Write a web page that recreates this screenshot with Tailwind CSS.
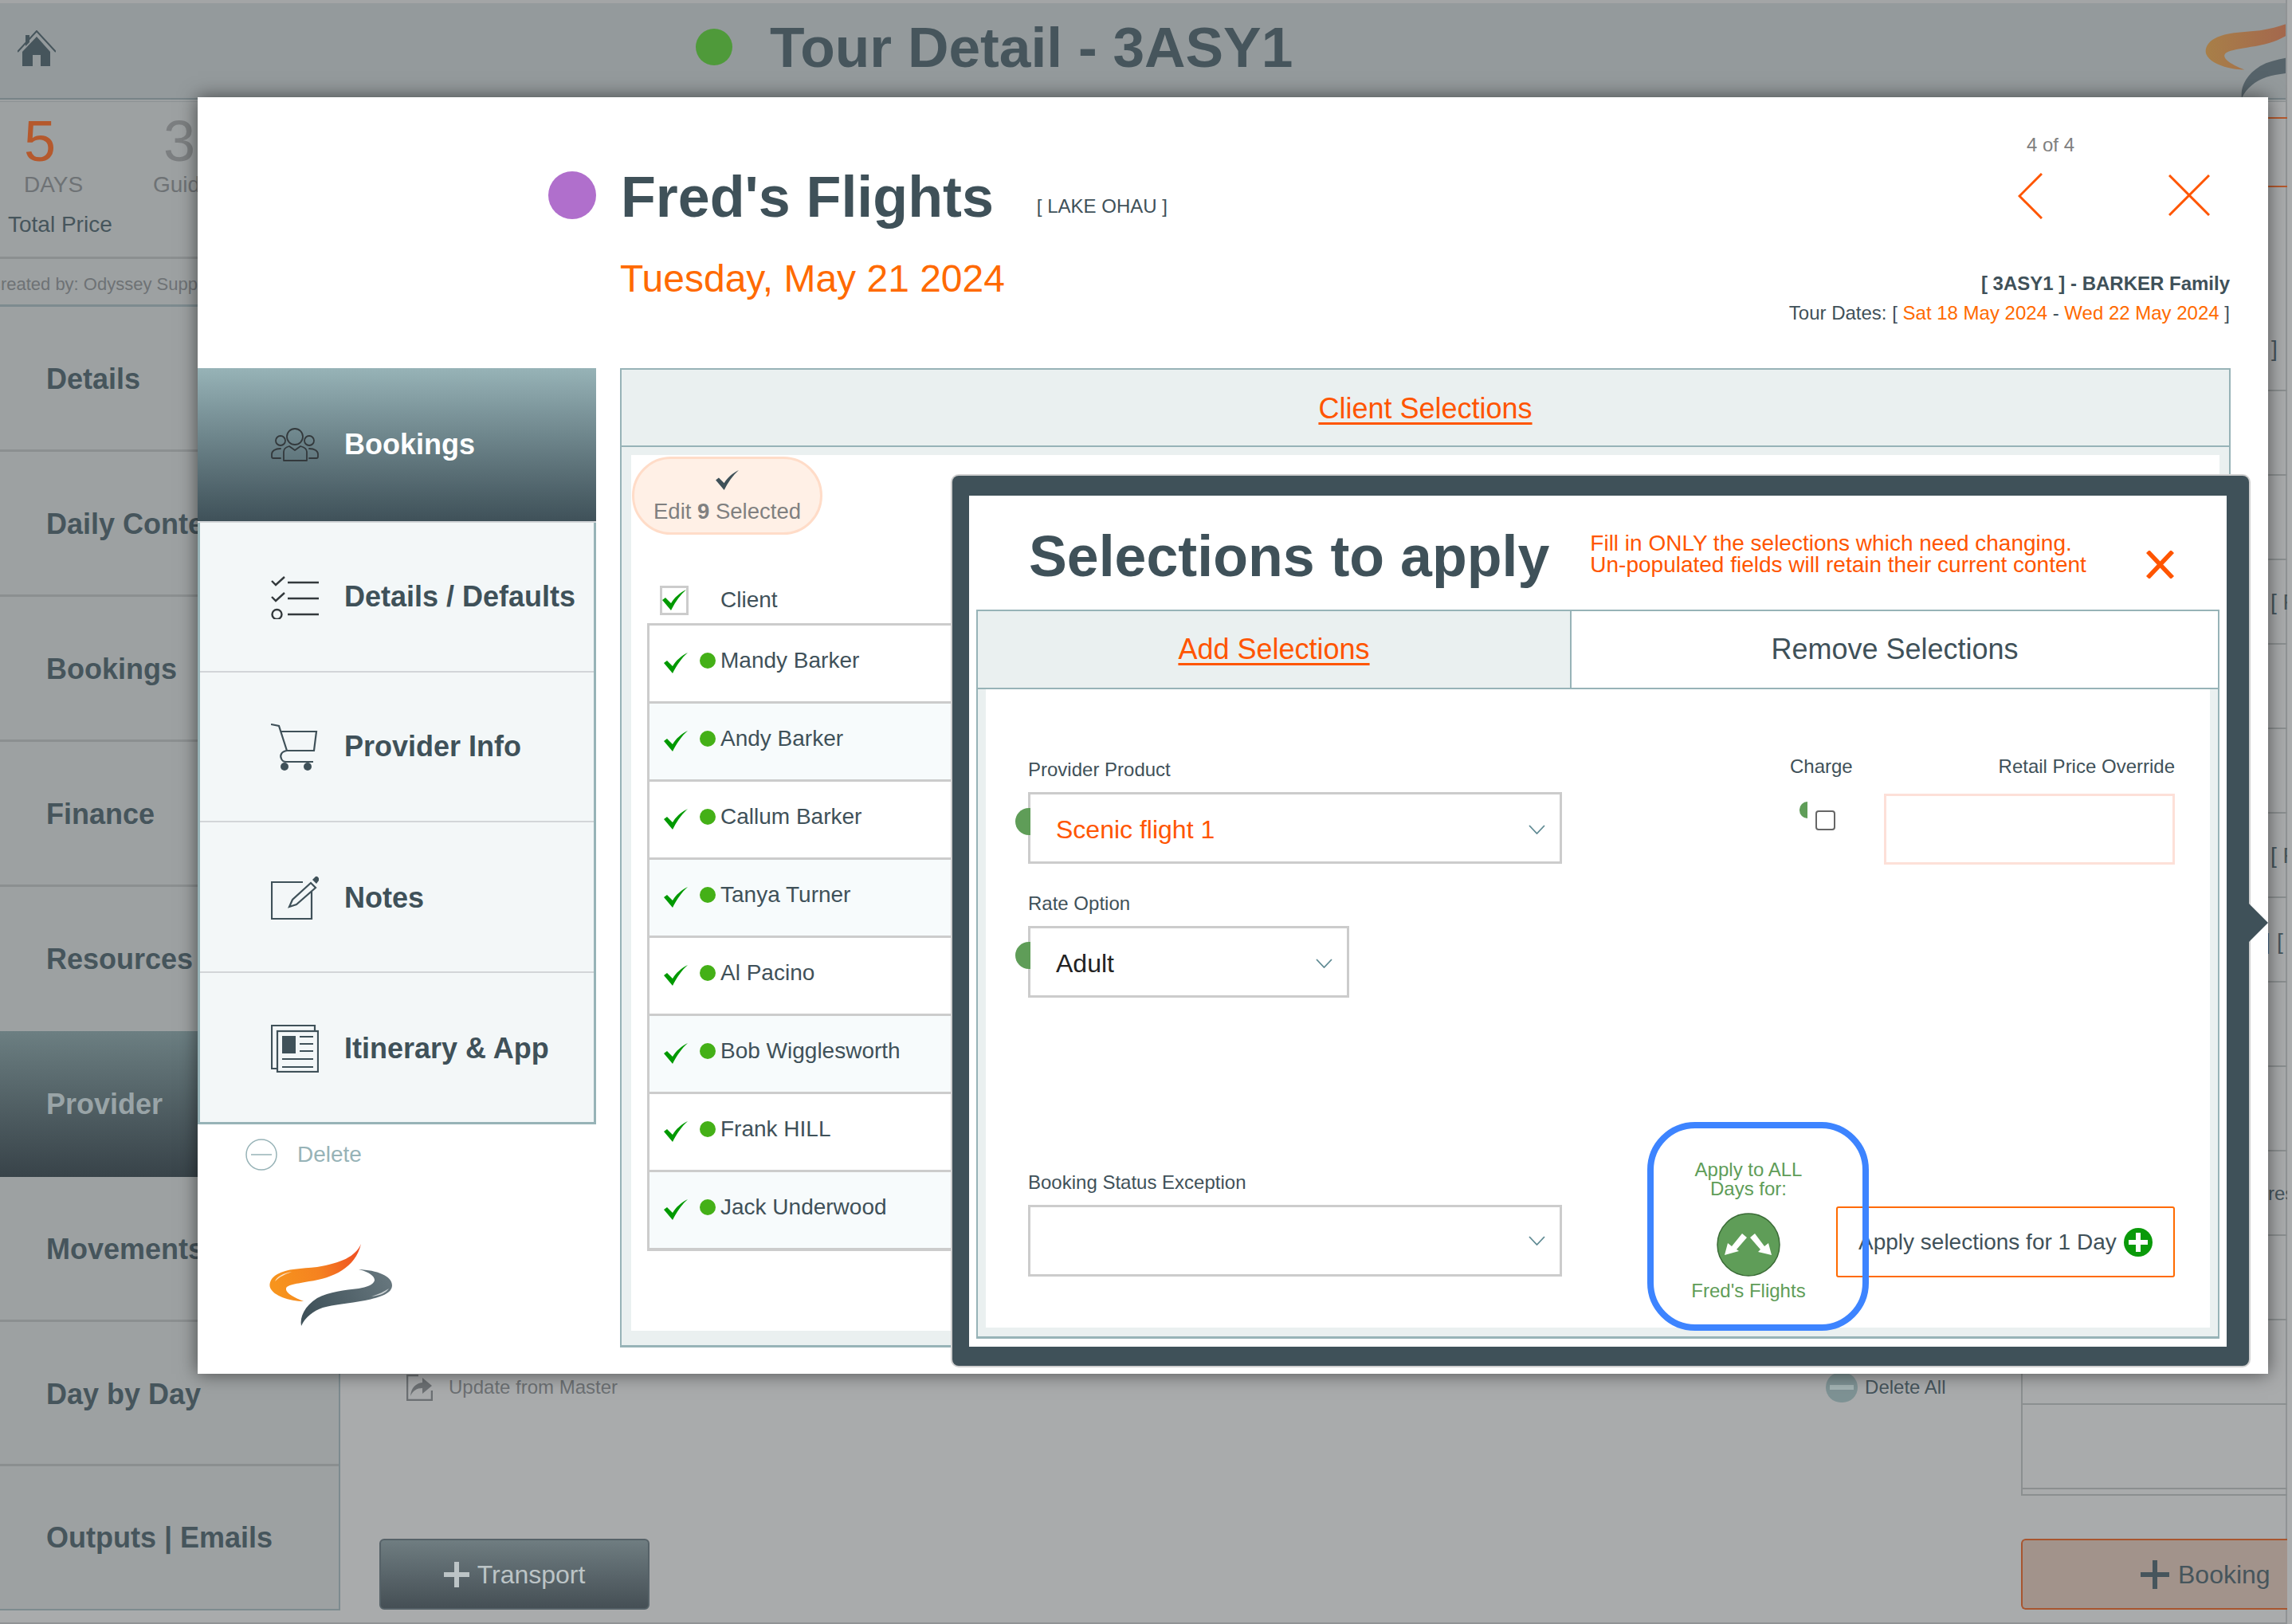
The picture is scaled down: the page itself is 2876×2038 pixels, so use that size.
<!doctype html>
<html>
<head>
<meta charset="utf-8">
<script src="https://cdn.jsdelivr.net/npm/@tailwindcss/browser@4"></script>
<title>Tour Detail</title>
</head>
<body class="font-['Liberation_Sans',Arial,sans-serif]">
<svg class="absolute w-0 h-0">
  <defs>
    <linearGradient id="o" x1="0" x2="1" y1="0.4" y2="0.2"><stop offset="0" stop-color="#f7941d"/><stop offset="0.5" stop-color="#f58220"/><stop offset="1" stop-color="#ef4e23"/></linearGradient>
    <linearGradient id="d" x1="0" x2="1" y1="0.6" y2="0.3"><stop offset="0" stop-color="#3f5159"/><stop offset="1" stop-color="#66767d"/></linearGradient>
    <linearGradient id="o2" x1="0" x2="1"><stop offset="0" stop-color="#a87f48"/><stop offset="1" stop-color="#a2604f"/></linearGradient>
  </defs>
</svg>
<div class="relative w-[2876px] h-[2038px] overflow-hidden flex bg-[#a9abac] text-[#46555c]">
  <!-- page behind the dialog -->
  <div class="w-[2870px] h-full flex flex-col border-r-2 border-[#909395]">
    <header class="relative h-[123px] shrink-0 border-t-[4px] border-[#a3a5a6] bg-[#949a9c] flex items-center pb-[9px] overflow-hidden">
      <svg class="ml-[22px] mt-[4px] w-[48px] h-[46px]" viewBox="0 0 48 46"><path d="M0 27L24 1L48 27" fill="none" stroke="#46555c" stroke-width="2"/><path fill="#46555c" d="M10 6h5v9l-5 5zM6 27L24 8L41 27V45H29V31H19V45H6z"/></svg>
      <div class="ml-[803px] w-[46px] h-[46px] rounded-full bg-[#4f9a3a]"></div>
      <div class="ml-[47px] text-[71.3px] font-bold leading-[72px] text-[#46555c]">Tour Detail - 3ASY1</div>
      <svg class="absolute left-[2767px] top-[1px] w-[178px] h-[118px]" viewBox="0 0 155 103"><path fill="url(#o2)" d="M115 0C108 16 90 24 60 29C40 31 22 31 10 38C2 42-1 50 1 55C5 65 25 72 43 72C33 68 20 62 21 56C22 51 35 50 50 47C80 43 108 30 115 0Z"/><path fill="#56636a" d="M112 32C135 33 154 40 154 52C154 62 140 67 120 71C100 75 80 76 67 80C55 84 45 92 40 103C38 92 44 78 60 68C75 60 95 58 112 56C122 54 130 52 132 46C133 40 122 34 112 32Z"/></svg>
    </header>
    <div class="h-[5px] shrink-0 border-t-2 border-b border-t-[#788488] border-b-[#8d9294] bg-[#9da1a2]"></div>
    <div class="flex flex-1 min-h-0 items-start border-b-2 border-[#909395] h-[1903px]">
      <!-- sidebar -->
      <aside class="w-[427px] shrink-0 h-[1893px] bg-[#9da1a2] border-r-2 border-b-2 border-[#7d8b8f] flex flex-col">
        <div class="h-[197px] shrink-0 border-b-[3px] border-[#8b8f90] pl-[10px]">
          <div class="flex pt-[13px]">
            <div class="w-[172px] pl-[20px]">
              <div class="text-[72px] leading-[72px] text-[#b5592d]">5</div>
              <div class="mt-[4px] text-[28px] leading-[30px] text-[#6e7275]">DAYS</div>
            </div>
            <div class="w-[100px] pl-[10px]">
              <div class="pl-[13px] text-[72px] leading-[72px] text-[#7c7f81]">3</div>
              <div class="mt-[4px] text-[28px] leading-[30px] text-[#6e7275]">Guides</div>
            </div>
          </div>
          <div class="mt-[20px] text-[28px] leading-[30px] text-[#46555c]">Total Price</div>
        </div>
        <div class="h-[60px] shrink-0 border-b-[3px] border-[#7d8b8f] -ml-[15px] pt-[18px] text-[22px] leading-[28px] text-[#6e7275] whitespace-nowrap">Created by: Odyssey Support</div>
        <div class="h-[182px] shrink-0 border-b-[3px] border-[#8b8f90] flex items-center pl-[58px] pt-[3px] text-[36px] font-bold">Details</div>
        <div class="h-[182px] shrink-0 border-b-[3px] border-[#8b8f90] flex items-center pl-[58px] pt-[3px] text-[36px] font-bold">Daily Content</div>
        <div class="h-[182px] shrink-0 border-b-[3px] border-[#8b8f90] flex items-center pl-[58px] pt-[3px] text-[36px] font-bold">Bookings</div>
        <div class="h-[182px] shrink-0 border-b-[3px] border-[#8b8f90] flex items-center pl-[58px] pt-[3px] text-[36px] font-bold">Finance</div>
        <div class="h-[181px] shrink-0 flex items-center pl-[58px] text-[36px] font-bold">Resources</div>
        <div class="h-[183px] shrink-0 bg-gradient-to-b from-[#6c7f82] to-[#384349] flex items-center pl-[58px] text-[36px] font-bold text-[#99a4a7]">Provider</div>
        <div class="h-[182px] shrink-0 border-b-[3px] border-[#8b8f90] flex items-center pl-[58px] pt-[3px] text-[36px] font-bold">Movements</div>
        <div class="h-[181px] shrink-0 border-b-[3px] border-[#8b8f90] flex items-center pl-[58px] pt-[3px] text-[36px] font-bold">Day by Day</div>
        <div class="h-[180px] shrink-0 flex items-center pl-[58px] text-[36px] font-bold">Outputs | Emails</div>
      </aside>
      <!-- main -->
      <main class="w-[2109px] shrink-0 pt-[1596px] flex flex-col">
        <div class="flex items-center h-[34px] pl-[83px] text-[24px]">
          <svg class="w-[33px] h-[33px]" viewBox="0 0 33 33"><path d="M15 1H1V32H32V20" fill="none" stroke="#6c7073" stroke-width="2.5"/><path fill="#6c7073" d="M5 27C6 16 12 11 20 10V4L32 14L20 24V17C13 17 8 20 5 27Z"/></svg>
          <span class="ml-[20px] text-[#6c7073]">Update from Master</span>
          <span class="ml-[1516px] w-[40px] h-[38px] rounded-full bg-[#7e9294] flex items-center justify-center"><span class="w-[30px] h-[6px] bg-[#a3b3b3]"></span></span>
          <span class="ml-[9px] text-[#46555c]">Delete All</span>
        </div>
        <div class="mt-[173px] ml-[49px] w-[339px] h-[89px] rounded-[6px] bg-gradient-to-b from-[#6f7d81] to-[#454f55] border-2 border-[#566268] flex items-center justify-center text-[32px] text-[#bcc4c6]">
          <svg class="w-[32px] h-[32px] mr-[10px]" viewBox="0 0 32 32"><path d="M13 0h6v13h13v6H19v13h-6V19H0v-6h13z" fill="#bcc4c6"/></svg>Transport
        </div>
      </main>
      <!-- right column -->
      <section class="w-[334px] shrink-0 flex flex-col">
        <div class="h-[257px] shrink-0 border-l-0 pt-[19px]">
          <div class="h-[88px] border-y-2 border-[#b5592d]"></div>
        </div>
        <div class="border-l-2 border-[#8b8f90] text-[28px] leading-[34px] text-[#46555c] whitespace-nowrap">
          <div class="h-[106px] overflow-hidden border-b-2 border-[#8b8f90] pl-[284px] pt-[36px]">R ]</div>
          <div class="h-[106px] border-b-2 border-[#8b8f90]"></div>
          <div class="h-[106px] border-b-2 border-[#8b8f90]"></div>
          <div class="h-[106px] overflow-hidden border-b-2 border-[#8b8f90] pl-[311px] pt-[36px]">[ F</div>
          <div class="h-[106px] border-b-2 border-[#8b8f90]"></div>
          <div class="h-[106px] border-b-2 border-[#8b8f90]"></div>
          <div class="h-[106px] overflow-hidden border-b-2 border-[#8b8f90] pl-[311px] pt-[36px]">[ F</div>
          <div class="h-[106px] overflow-hidden border-b-2 border-[#8b8f90] pl-[304px] pt-[38px]">| [</div>
          <div class="h-[106px] border-b-2 border-[#8b8f90]"></div>
          <div class="h-[106px] border-b-2 border-[#8b8f90]"></div>
          <div class="h-[106px] overflow-hidden border-b-2 border-[#8b8f90] pl-[308px] pt-[36px] text-[24px]">res</div>
          <div class="h-[106px] border-b-2 border-[#8b8f90]"></div>
          <div class="h-[106px] border-b-2 border-[#8b8f90]"></div>
          <div class="h-[106px] border-b-2 border-[#8b8f90]"></div>
          <div class="h-[8px] border-b-2 border-[#8b8f90]"></div>
        </div>
        <div class="mt-[54px] h-[89px] border-2 border-r-0 border-[#a8552f] rounded-l-[6px] bg-[#a2938b] flex items-center pl-[148px] text-[32px] text-[#46555c]">
          <svg class="w-[36px] h-[36px] mr-[11px]" viewBox="0 0 36 36"><path d="M15 0h6v15h15v6H21v15h-6V21H0v-6h15z" fill="#46555c"/></svg>Booking
        </div>
      </section>
    </div>
  </div>

  <!-- main dialog -->
  <div class="absolute left-[248px] top-[122px] w-[2598px] h-[1602px] bg-white shadow-[0_0_22px_rgba(0,0,0,0.55)] text-[#3f5159]">
    <div class="h-[340px] flex justify-between pr-[48px]">
      <div class="pl-[440px] pt-[93px]">
        <div class="flex items-center h-[60px]">
          <div class="w-[60px] h-[60px] rounded-full bg-[#b06fcc]"></div>
          <div class="ml-[31px] mt-[3px] text-[71.8px] leading-[72px] font-bold whitespace-nowrap">Fred's Flights</div>
          <div class="ml-[54px] mt-[27px] text-[24px] leading-[28px] whitespace-nowrap">[ LAKE OHAU ]</div>
        </div>
        <div class="ml-[90px] mt-[47px] text-[48px] leading-[56px] text-[#ff6a00] whitespace-nowrap">Tuesday, May 21 2024</div>
      </div>
      <div class="flex flex-col items-end pt-[48px]">
        <div class="w-[266px]">
          <div class="ml-[11px] text-[24px] leading-[24px] text-[#808080]">4 of 4</div>
          <div class="mt-[23px] h-[58px] flex justify-between pr-[25px]">
            <svg class="w-[31px] h-[58px]" viewBox="0 0 31 58"><path d="M30 1L2 29L30 57" fill="none" stroke="#ff5500" stroke-width="3"/></svg>
            <svg class="w-[52px] h-[52px] mt-[2px]" viewBox="0 0 52 52"><path d="M1 1L51 51M51 1L1 51" fill="none" stroke="#ff5500" stroke-width="3"/></svg>
          </div>
        </div>
        <div class="mt-[67px] text-[24px] leading-[28px] font-bold whitespace-nowrap">[ 3ASY1 ] - BARKER Family</div>
        <div class="mt-[9px] text-[24px] leading-[28px] whitespace-nowrap">Tour Dates: [ <span class="text-[#ff6a00]">Sat 18 May 2024</span> - <span class="text-[#ff6a00]">Wed 22 May 2024</span> ]</div>
      </div>
    </div>
    <div class="flex items-start">
      <!-- dialog nav -->
      <div class="w-[500px] shrink-0">
        <nav class="h-[949px] border-x-[3px] border-b-[3px] border-[#97b3b7] bg-[#f3f7f8] flex flex-col text-[36px] font-bold">
          <div class="h-[194px] shrink-0 -mx-[3px] bg-gradient-to-b from-[#97b3b7] to-[#3f5159] border-b-2 border-[#d2d5d8] flex items-center pl-[92px] text-white">
            <svg class="w-[60px] h-[42px] mr-[32px]" viewBox="0 0 60 42" fill="none" stroke="#33393c" stroke-width="1.8" stroke-linejoin="round" stroke-linecap="round"><ellipse cx="30" cy="11" rx="10" ry="10"/><circle cx="12" cy="16" r="6"/><circle cx="48" cy="16" r="6"/><path d="M16 41V30C16 26 19 24 23 23L30 28L37 23C41 24 45 26 45 30V41Z"/><path d="M12 26C5 26 1 29 1 33V36C1 38 2 38 3 38H12M48 26C55 26 59 29 59 33V36C59 38 58 38 57 38H48"/></svg>Bookings
          </div>
          <div class="h-[188px] shrink-0 border-b-2 border-[#d2d5d8] flex items-center pl-[89px]">
            <svg class="w-[60px] h-[55px] mr-[32px]" viewBox="0 0 60 55" fill="none" stroke="#33393c" stroke-width="2.4"><path d="M1 7L6 12L17 2M1 27L6 32L17 22"/><path d="M21 9H60M21 29H60M21 49H60"/><circle cx="7.5" cy="49" r="6"/></svg>Details / Defaults
          </div>
          <div class="h-[188px] shrink-0 border-b-2 border-[#d2d5d8] flex items-center pl-[89px]">
            <svg class="w-[60px] h-[59px] mr-[32px]" viewBox="0 0 60 59" fill="none" stroke="#3f5159" stroke-width="2.2"><path d="M0 1L10 3L20 34H54L57 10H12"/><path d="M20 34C13 35 11 40 13 44C14 47 16 48 19 48H53"/><circle cx="17" cy="54" r="5" fill="#3f5159" stroke="none"/><circle cx="46" cy="54" r="5" fill="#3f5159" stroke="none"/></svg>Provider Info
          </div>
          <div class="h-[189px] shrink-0 border-b-2 border-[#d2d5d8] flex items-center pl-[89px] pt-[2px]">
            <svg class="w-[60px] h-[55px] mr-[32px]" viewBox="0 0 60 55" fill="none" stroke="#3f5159" stroke-width="2.2"><path d="M40 8H1V54H51V20"/><path d="M23 39L27 30L50 9L56 15L32 36Z"/><path d="M52 5L56 1Q58 0 60 3V6L57 10Z" fill="#3f5159" stroke="none"/></svg>Notes
          </div>
          <div class="flex-1 flex items-center pl-[89px] pt-[2px]">
            <svg class="w-[60px] h-[60px] mr-[32px]" viewBox="0 0 60 60" fill="none" stroke="#3f5159" stroke-width="2.2"><path d="M55 8V1H1V55H8"/><rect x="8" y="8" width="51" height="51"/><rect x="14" y="14" width="17" height="22" fill="#3f5159" stroke="none"/><path d="M36 15H53M36 24H53M36 33H53M14 43H53M14 53H53"/></svg>Itinerary &amp; App
          </div>
        </nav>
        <div class="mt-[18px] ml-[60px] flex items-center text-[28px] leading-[40px] text-[#97b3b7]">
          <svg class="w-[40px] h-[40px] mr-[25px]" viewBox="0 0 40 40" fill="none" stroke="#97b3b7" stroke-width="1.5"><circle cx="20" cy="20" r="19"/><path d="M7 20H33"/></svg>Delete
        </div>
        <svg class="ml-[90px] mt-[92px] w-[155px] h-[103px] overflow-visible" viewBox="0 0 155 103"><path fill="url(#o)" d="M115 0C108 16 90 24 60 29C40 31 22 31 10 38C2 42-1 50 1 55C5 65 25 72 43 72C33 68 20 62 21 56C22 51 35 50 50 47C80 43 108 30 115 0Z"/><path d="M7 47C10 40 18 37 28 35C20 38 13 41 7 47Z" fill="#fff" opacity="0.75"/><path fill="url(#d)" d="M112 32C135 33 154 40 154 52C154 62 140 67 120 71C100 75 80 76 67 80C55 84 45 92 40 103C38 92 44 78 60 68C75 60 95 58 112 56C122 54 130 52 132 46C133 40 122 34 112 32Z"/><path d="M150 56C146 62 138 65 128 66C137 63 144 60 150 56Z" fill="#fff" opacity="0.7"/></svg>
      </div>
      <!-- client selections panel -->
      <div class="ml-[30px] w-[2021px] h-[1229px] border-2 border-b-[3px] border-[#97b3b7] bg-[#eaf0f0] flex flex-col">
        <div class="h-[97px] shrink-0 border-b-2 border-[#97b3b7] flex items-center justify-center pt-[2px] text-[36px] text-[#ff5500] underline underline-offset-[5px]">Client Selections</div>
        <div class="flex-1 mx-[12px] mt-[10px] mb-[18px] bg-white pl-[1px] pt-[2px]">
          <div class="w-[239px] h-[98px] rounded-full bg-[#fff0e6] border-[3px] border-[#ffdcc8] flex flex-col items-center pt-[14px]">
            <svg class="w-[31px] h-[25px]" viewBox="0 0 30 26"><path fill="#3f5159" d="M0 13L4 10L11 17C15 10 22 4 30 0C22 7 16 16 11 26Z"/></svg>
            <div class="mt-[12px] text-[27.5px] leading-[30px] text-[#808080] whitespace-nowrap">Edit <b>9</b> Selected</div>
          </div>
          <div class="mt-[64px] ml-[35px] h-[36px] flex items-center text-[28px]">
            <div class="w-[36px] h-[37px] border-[3px] border-[#cccccc] flex items-center justify-center"><svg class="w-[30px] h-[26px]" viewBox="0 0 30 26"><path fill="#009900" d="M0 13L4 10L11 17C15 10 22 4 30 0C22 7 16 16 11 26Z"/></svg></div>
            <span class="ml-[40px]">Client</span>
          </div>
          <div class="mt-[11px] ml-[19px] border-l-[3px] border-t-[3px] border-b-[4px] border-[#cccccc] text-[28px]">
            <div class="h-[98px] flex items-start pt-[31px] pl-[18px] border-b-[3px] border-[#cccccc] bg-white"><svg class="w-[30px] h-[26px] mt-[3px]" viewBox="0 0 30 26"><path fill="#009900" d="M0 13L4 10L11 17C15 10 22 4 30 0C22 7 16 16 11 26Z"/></svg><span class="ml-[15px] mt-[3px] w-[20px] h-[20px] rounded-full bg-[#44b017]"></span><span class="ml-[6px] leading-[26px]">Mandy Barker</span></div>
            <div class="h-[98px] flex items-start pt-[31px] pl-[18px] border-b-[3px] border-[#cccccc] bg-[#f7fbfc]"><svg class="w-[30px] h-[26px] mt-[3px]" viewBox="0 0 30 26"><path fill="#009900" d="M0 13L4 10L11 17C15 10 22 4 30 0C22 7 16 16 11 26Z"/></svg><span class="ml-[15px] mt-[3px] w-[20px] h-[20px] rounded-full bg-[#44b017]"></span><span class="ml-[6px] leading-[26px]">Andy Barker</span></div>
            <div class="h-[98px] flex items-start pt-[31px] pl-[18px] border-b-[3px] border-[#cccccc] bg-white"><svg class="w-[30px] h-[26px] mt-[3px]" viewBox="0 0 30 26"><path fill="#009900" d="M0 13L4 10L11 17C15 10 22 4 30 0C22 7 16 16 11 26Z"/></svg><span class="ml-[15px] mt-[3px] w-[20px] h-[20px] rounded-full bg-[#44b017]"></span><span class="ml-[6px] leading-[26px]">Callum Barker</span></div>
            <div class="h-[98px] flex items-start pt-[31px] pl-[18px] border-b-[3px] border-[#cccccc] bg-[#f7fbfc]"><svg class="w-[30px] h-[26px] mt-[3px]" viewBox="0 0 30 26"><path fill="#009900" d="M0 13L4 10L11 17C15 10 22 4 30 0C22 7 16 16 11 26Z"/></svg><span class="ml-[15px] mt-[3px] w-[20px] h-[20px] rounded-full bg-[#44b017]"></span><span class="ml-[6px] leading-[26px]">Tanya Turner</span></div>
            <div class="h-[98px] flex items-start pt-[31px] pl-[18px] border-b-[3px] border-[#cccccc] bg-white"><svg class="w-[30px] h-[26px] mt-[3px]" viewBox="0 0 30 26"><path fill="#009900" d="M0 13L4 10L11 17C15 10 22 4 30 0C22 7 16 16 11 26Z"/></svg><span class="ml-[15px] mt-[3px] w-[20px] h-[20px] rounded-full bg-[#44b017]"></span><span class="ml-[6px] leading-[26px]">Al Pacino</span></div>
            <div class="h-[98px] flex items-start pt-[31px] pl-[18px] border-b-[3px] border-[#cccccc] bg-[#f7fbfc]"><svg class="w-[30px] h-[26px] mt-[3px]" viewBox="0 0 30 26"><path fill="#009900" d="M0 13L4 10L11 17C15 10 22 4 30 0C22 7 16 16 11 26Z"/></svg><span class="ml-[15px] mt-[3px] w-[20px] h-[20px] rounded-full bg-[#44b017]"></span><span class="ml-[6px] leading-[26px]">Bob Wigglesworth</span></div>
            <div class="h-[98px] flex items-start pt-[31px] pl-[18px] border-b-[3px] border-[#cccccc] bg-white"><svg class="w-[30px] h-[26px] mt-[3px]" viewBox="0 0 30 26"><path fill="#009900" d="M0 13L4 10L11 17C15 10 22 4 30 0C22 7 16 16 11 26Z"/></svg><span class="ml-[15px] mt-[3px] w-[20px] h-[20px] rounded-full bg-[#44b017]"></span><span class="ml-[6px] leading-[26px]">Frank HILL</span></div>
            <div class="h-[95px] flex items-start pt-[31px] pl-[18px] bg-[#f7fbfc]"><svg class="w-[30px] h-[26px] mt-[3px]" viewBox="0 0 30 26"><path fill="#009900" d="M0 13L4 10L11 17C15 10 22 4 30 0C22 7 16 16 11 26Z"/></svg><span class="ml-[15px] mt-[3px] w-[20px] h-[20px] rounded-full bg-[#44b017]"></span><span class="ml-[6px] leading-[26px]">Jack Underwood</span></div>
          </div>
        </div>
      </div>
    </div>

    <!-- selections to apply dialog -->
    <div class="absolute left-[947px] top-[475px] w-[1627px] h-[1117px] rounded-[8px] bg-[#3f5159] shadow-[0_0_0_2px_#d0d0d0] pl-[21px] pt-[25px] pr-[28px] pb-[24px]">
      <svg class="absolute left-full top-[537px] w-[24px] h-[48px]" viewBox="0 0 24 48"><path d="M0 0L24 24L0 48Z" fill="#3f5159"/></svg>
      <div class="h-full bg-white flex flex-col">
        <div class="h-[143px] shrink-0 flex items-center pl-[75px] pt-[8px]">
          <div class="text-[71.7px] leading-[80px] font-bold whitespace-nowrap">Selections to apply</div>
          <div class="ml-[51px] -mt-[6px] text-[28px] leading-[27px] text-[#ff5500] whitespace-nowrap">Fill in ONLY the selections which need changing.<br>Un-populated fields will retain their current content</div>
          <svg class="ml-auto mr-[66px] mt-[22px] w-[35px] h-[35px]" viewBox="0 0 35 35"><path d="M2 1L33 34M33 1L2 34" fill="none" stroke="#ff5500" stroke-width="5.5"/></svg>
        </div>
        <div class="flex-1 mx-[9px] mb-[10px] flex flex-col">
          <div class="h-[100px] shrink-0 flex border-2 border-[#97b3b7] text-[36px]">
            <div class="w-[745px] bg-[#eaf0f0] border-r-2 border-[#97b3b7] flex items-center justify-center text-[#ff5500] underline underline-offset-[5px]">Add Selections</div>
            <div class="flex-1 flex items-center justify-center">Remove Selections</div>
          </div>
          <div class="flex-1 border-x-2 border-b-[3px] border-[#97b3b7] bg-[#eaf0f0] px-[10px] pb-[11px] flex">
            <div class="relative flex-1 bg-white flex">
              <!-- left fields -->
              <div class="ml-[53px] w-[670px] shrink-0 text-[24px] leading-[24px]">
                <div class="pt-[89px]">Provider Product</div>
                <div class="relative mt-[16px] h-[90px] border-[3px] border-[#cccccc] bg-white flex items-center justify-between pl-[32px] pr-[18px] pt-[4px] text-[32px] text-[#ff5500]">
                  <span class="absolute right-full top-[17px] w-[19px] h-[34px] rounded-l-full bg-[#5f9d58]"></span>
                  Scenic flight 1
                  <svg class="w-[21px] h-[12px]" viewBox="0 0 21 12"><path d="M1 1L10.5 11L20 1" fill="none" stroke="#5f8a93" stroke-width="1.8"/></svg>
                </div>
                <div class="mt-[38px]">Rate Option</div>
                <div class="relative mt-[16px] w-[403px] h-[90px] border-[3px] border-[#cccccc] bg-white flex items-center justify-between pl-[32px] pr-[18px] pt-[4px] text-[32px] text-[#222222]">
                  <span class="absolute right-full top-[17px] w-[19px] h-[34px] rounded-l-full bg-[#5f9d58]"></span>
                  Adult
                  <svg class="w-[21px] h-[12px]" viewBox="0 0 21 12"><path d="M1 1L10.5 11L20 1" fill="none" stroke="#5f8a93" stroke-width="1.8"/></svg>
                </div>
                <div class="mt-[220px]">Booking Status Exception</div>
                <div class="mt-[16px] h-[90px] border-[3px] border-[#cccccc] bg-white flex items-center justify-end pr-[18px]">
                  <svg class="w-[21px] h-[12px]" viewBox="0 0 21 12"><path d="M1 1L10.5 11L20 1" fill="none" stroke="#5f8a93" stroke-width="1.8"/></svg>
                </div>
              </div>
              <!-- right fields -->
              <div class="ml-[124px] w-[645px] shrink-0 flex flex-col">
                <div class="flex pl-[162px] pt-[85px] text-[24px] leading-[24px]">
                  <div class="w-[118px]">
                    <div>Charge</div>
                    <div class="relative mt-[43px] ml-[32px] w-[25px] h-[25px] rounded-[4px] border-2 border-[#666666] bg-white">
                      <span class="absolute right-[33px] -top-[13px] w-[10px] h-[21px] rounded-l-full bg-[#5f9d58]"></span>
                    </div>
                  </div>
                  <div class="w-[366px]">
                    <div class="text-right">Retail Price Override</div>
                    <div class="mt-[22px] h-[89px] border-[3px] border-[#fde0d8]"></div>
                  </div>
                </div>
                <div class="flex mt-[371px]">
                  <div class="w-[220px] shrink-0 flex flex-col items-center text-[24px] leading-[24px] text-[#5f9d58] text-center">
                    <div>Apply to ALL<br>Days for:</div>
                    <svg class="mt-[18px] w-[80px] h-[80px]" viewBox="0 0 80 80"><circle cx="40" cy="40" r="39" fill="#5f9d58" stroke="#3a6b36" stroke-width="1.5"/><path fill="#fff" d="M32 26L38 31L25 46L28 48L10 53L14 38L19 42ZM48 26L42 31L55 46L52 49L69 53L65 38L60 42Z"/></svg>
                    <div class="mt-[6px] whitespace-nowrap">Fred's Flights</div>
                  </div>
                  <div class="mt-[58px] w-[426px] h-[89px] rounded-[3px] border-2 border-[#ff6a00] flex items-center pl-[26px] text-[28px] whitespace-nowrap">
                    Apply selections for 1 Day
                    <svg class="ml-[9px] w-[36px] h-[36px]" viewBox="0 0 36 36"><circle cx="18" cy="18" r="18" fill="#0a9a0a"/><path d="M15 6h6v9h9v6h-9v9h-6v-9H6v-6h9z" fill="#fff"/></svg>
                  </div>
                </div>
              </div>
              <!-- annotation ring -->
              <div class="absolute left-[830px] top-[543px] w-[278px] h-[262px] rounded-[60px] border-[8px] border-[#3d84ff]"></div>
            </div>
          </div>
        </div>
      </div>
    </div>
  </div>
</div>
</body>
</html>
